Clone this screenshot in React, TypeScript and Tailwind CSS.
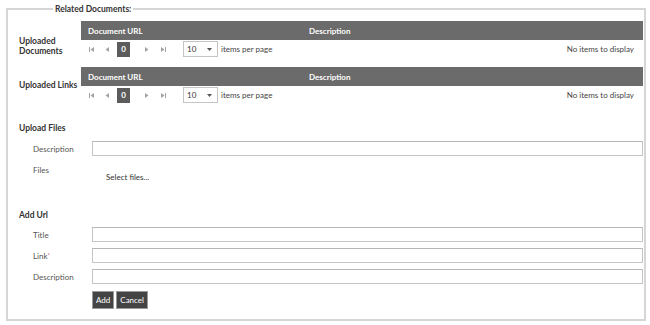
import React from "react"

// Related documents panel: two empty grids plus upload / add-url forms.

function FirstIcon() {
  return (
    <svg width="5" height="5" viewBox="0 0 5 5" className="fill-[#a3a3a3]">
      <rect x="0" y="0" width="1" height="5" />
      <path d="M5 0 L1.5 2.5 L5 5 Z" />
    </svg>
  )
}

function PrevIcon() {
  return (
    <svg width="4" height="5" viewBox="0 0 4 5" className="fill-[#a3a3a3]">
      <path d="M4 0 L0.5 2.5 L4 5 Z" />
    </svg>
  )
}

function NextIcon() {
  return (
    <svg width="4" height="5" viewBox="0 0 4 5" className="fill-[#a3a3a3]">
      <path d="M0 0 L3.5 2.5 L0 5 Z" />
    </svg>
  )
}

function LastIcon() {
  return (
    <svg width="5" height="5" viewBox="0 0 5 5" className="fill-[#a3a3a3]">
      <path d="M0 0 L3.5 2.5 L0 5 Z" />
      <rect x="4" y="0" width="1" height="5" />
    </svg>
  )
}

function Grid() {
  return (
    <div className="flex-1">
      <div className="grid h-[19px] grid-cols-[228px_1fr] items-center bg-[#6b6b6b] text-[8px] font-bold text-white">
        <div className="pl-[7px]">Document URL</div>
        <div>Description</div>
      </div>
      <div className="flex h-[18px] items-center text-[8px] text-[#444]">
        <div className="ml-[8px] flex items-center">
          <FirstIcon />
        </div>
        <div className="ml-[11px] flex items-center">
          <PrevIcon />
        </div>
        <div className="ml-[8px] flex h-[15px] w-[13px] items-center justify-center bg-[#5c5c5c] font-bold text-white">
          0
        </div>
        <div className="ml-[15px] flex items-center">
          <NextIcon />
        </div>
        <div className="ml-[12px] flex items-center">
          <LastIcon />
        </div>
        <div className="ml-[17px] flex h-[16px] w-[35px] items-center justify-between border border-[#c4c4c4] pl-[3px] pr-[5px] text-[#333]">
          <span>10</span>
          <svg width="5" height="3" viewBox="0 0 5 3" className="fill-[#555]">
            <path d="M0 0 L5 0 L2.5 3 Z" />
          </svg>
        </div>
        <span className="ml-[3px]">items per page</span>
        <span className="ml-auto pr-[9px]">No items to display</span>
      </div>
    </div>
  )
}

function Field({ label, required }: { label: string; required?: boolean }) {
  return (
    <div className="flex h-[15px] items-center">
      <div className="w-[73px] pl-[14px] text-[8px] text-[#555]">
        {label}
        {required && <span className="relative -top-[2px] text-[6px] text-[#d33]">*</span>}
      </div>
      <div className="h-[15px] flex-1 border border-[#c4c4c4] border-t-[#b5b5b5] bg-white" />
    </div>
  )
}

export default function App() {
  return (
    <div className="h-[325px] w-[650px] overflow-hidden bg-white font-[Lato,sans-serif] text-[#333]">
      <fieldset className="ml-[6px] mr-[4px] mt-[3px] h-[318px] border-2 border-[#d6d6d6] pl-[11px] pr-[1px]">
        <legend className="ml-[34px] px-[2px] text-[8.5px] font-bold leading-[12px] text-[#333]">
          Related Documents:
        </legend>

        <div className="mt-[6px] flex">
          <div className="w-[62px] pt-[15px] text-[8.5px] font-bold leading-[10px]">
            Uploaded Documents
          </div>
          <Grid />
        </div>

        <div className="mt-[9px] flex items-center">
          <div className="w-[62px] text-[8.5px] font-bold">Uploaded Links</div>
          <Grid />
        </div>

        <div className="mt-[18px] text-[8.5px] font-bold leading-[12px]">Upload Files</div>
        <div className="mt-[7px]">
          <Field label="Description" />
        </div>
        <div className="mt-[6px] flex">
          <div className="w-[73px] pl-[14px] pt-[2px] text-[8px] leading-[12px] text-[#555]">Files</div>
          <div className="pl-[14px] pt-[9px] text-[8px] leading-[12px] text-[#333]">Select files...</div>
        </div>

        <div className="mt-[26px] text-[8.5px] font-bold leading-[12px]">Add Url</div>
        <div className="mt-[6px] flex flex-col gap-[6px]">
          <Field label="Title" />
          <Field label="Link" required />
          <Field label="Description" />
        </div>
        <div className="mt-[7px] flex gap-[2px] pl-[73px]">
          <button className="h-[18px] border border-[#9a9a9a] bg-[#444] px-[3px] text-[8px] text-white">
            Add
          </button>
          <button className="h-[18px] border border-[#9a9a9a] bg-[#444] px-[3px] text-[8px] text-white">
            Cancel
          </button>
        </div>
      </fieldset>
    </div>
  )
}
